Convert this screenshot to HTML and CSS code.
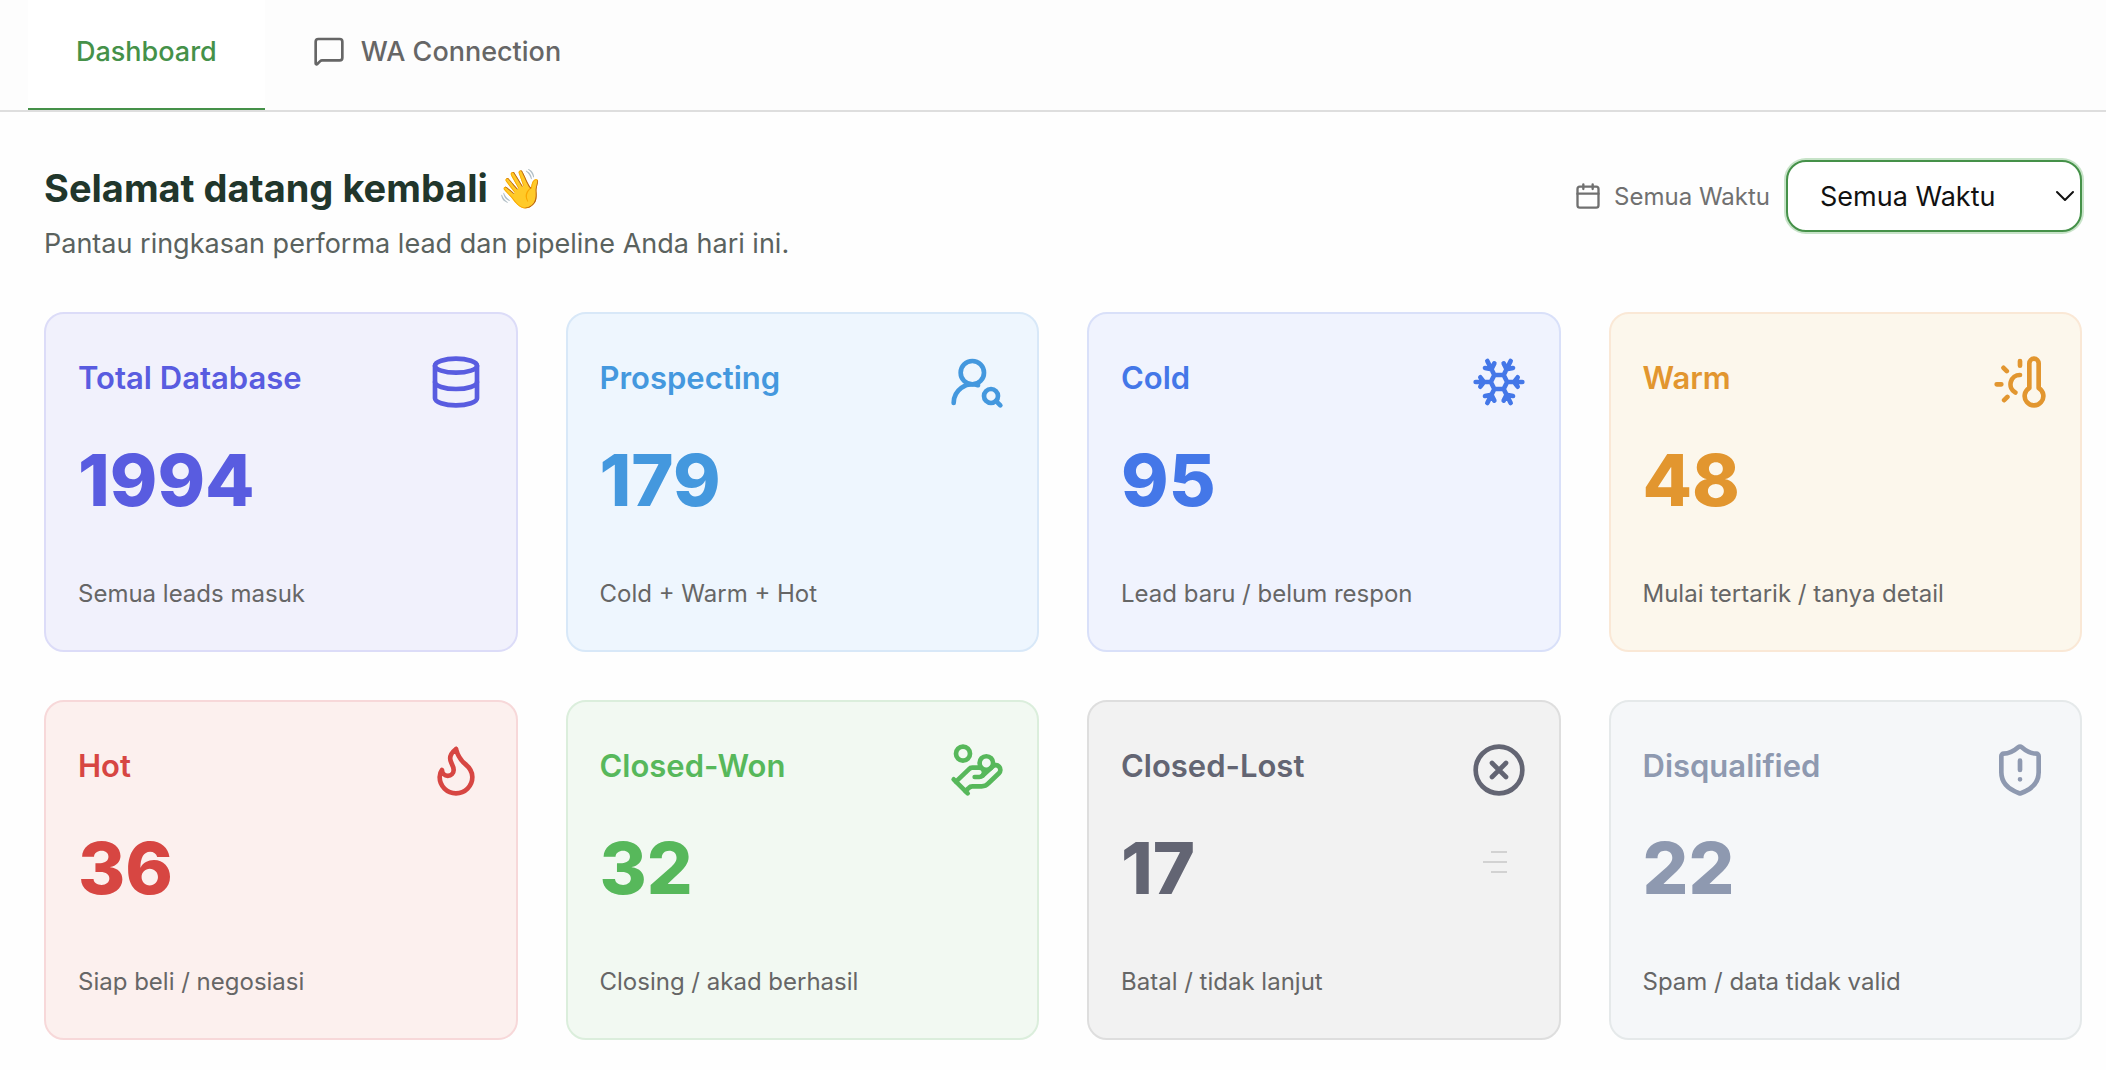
FILE: index.html
```html
<!DOCTYPE html>
<html lang="id">
<head>
<meta charset="utf-8">
<meta name="viewport" content="width=device-width, initial-scale=1">
<title>Dashboard</title>
<link rel="stylesheet" href="styles.css">
</head>
<body>
<nav class="tabs">
  <a class="tab tab-active" href="#dashboard" aria-current="page">Dashboard</a>
  <a class="tab" href="#wa">
    <svg class="icon tab-icon" viewBox="0 0 24 24" aria-hidden="true"><path d="M22 17a2 2 0 0 1-2 2H6.828a2 2 0 0 0-1.414.586l-2.202 2.202A.71.71 0 0 1 2 21.286V5a2 2 0 0 1 2-2h16a2 2 0 0 1 2 2z"/></svg>
    WA Connection
  </a>
</nav>
<main class="page">
  <header class="intro">
    <div>
      <h1 class="greeting">Selamat datang kembali 👋</h1>
      <p class="subtitle">Pantau ringkasan performa lead dan pipeline Anda hari ini.</p>
    </div>
    <div class="filter">
      <label class="filter-label" for="period">
        <svg class="icon filter-icon" viewBox="0 0 24 24" aria-hidden="true"><path d="M8 2v4M16 2v4M3 10h18"/><rect x="3" y="4" width="18" height="18" rx="2"/></svg>
        Semua Waktu
      </label>
      <div class="select-wrap">
        <select class="select" id="period"><option>Semua Waktu</option></select>
        <svg class="icon chevron" viewBox="0 0 20 12" aria-hidden="true"><path d="M2 2l8 8 8-8"/></svg>
      </div>
    </div>
  </header>
  <section class="grid">
    <article class="card indigo">
      <div class="card-head"><h2 class="title">Total Database</h2>
        <svg class="icon card-icon" viewBox="0 0 24 24" aria-hidden="true"><ellipse cx="12" cy="5" rx="9" ry="3"/><path d="M3 5V19A9 3 0 0 0 21 19V5"/><path d="M3 12A9 3 0 0 0 21 12"/></svg></div>
      <p class="value">1994</p>
      <p class="note">Semua leads masuk</p>
    </article>
    <article class="card sky">
      <div class="card-head"><h2 class="title">Prospecting</h2>
        <svg class="icon card-icon" viewBox="0 0 24 24" aria-hidden="true"><circle cx="10" cy="8" r="5"/><path d="M2 21a8 8 0 0 1 10.434-7.62"/><circle cx="18" cy="18" r="3"/><path d="m22 22-1.9-1.9"/></svg></div>
      <p class="value">179</p>
      <p class="note">Cold + Warm + Hot</p>
    </article>
    <article class="card blue">
      <div class="card-head"><h2 class="title">Cold</h2>
        <svg class="icon card-icon" viewBox="0 0 24 24" aria-hidden="true"><path d="m10 20-1.25-2.5L6 18M10 4 8.75 6.5 6 6M14 20l1.25-2.5L18 18M14 4l1.25 2.5L18 6M17 21l-3-6h-4M17 3l-3 6 1.5 3M2 12h6.5L10 9M20 10l-1.5 2 1.5 2M22 12h-6.5L14 15M4 10l1.5 2L4 14M7 21l3-6-1.5-3M7 3l3 6h4"/></svg></div>
      <p class="value">95</p>
      <p class="note">Lead baru / belum respon</p>
    </article>
    <article class="card amber">
      <div class="card-head"><h2 class="title">Warm</h2>
        <svg class="icon card-icon" viewBox="0 0 24 24" aria-hidden="true"><path d="M12 9a4 4 0 0 0-2 7.5M12 3v2M6.6 18.4l-1.4 1.4M20 4v10.54a4 4 0 1 1-4 0V4a2 2 0 0 1 4 0ZM4 13H2M6.34 7.34 4.93 5.93"/></svg></div>
      <p class="value">48</p>
      <p class="note">Mulai tertarik / tanya detail</p>
    </article>
    <article class="card red">
      <div class="card-head"><h2 class="title">Hot</h2>
        <svg class="icon card-icon" viewBox="0 0 24 24" aria-hidden="true"><path d="M12 3q1 4 4 6.5t3 5.5a1 1 0 0 1-14 0 5 5 0 0 1 1-3 1 1 0 0 0 5 0c0-2-1.5-3-1.5-5q0-2 2.5-4"/></svg></div>
      <p class="value">36</p>
      <p class="note">Siap beli / negosiasi</p>
    </article>
    <article class="card green">
      <div class="card-head"><h2 class="title">Closed-Won</h2>
        <svg class="icon card-icon" viewBox="0 0 24 24" aria-hidden="true"><path d="M11 15h2a2 2 0 1 0 0-4h-3c-.6 0-1.1.2-1.4.6L3 17"/><path d="m7 21 1.6-1.4c.3-.4.8-.6 1.4-.6h4c1.1 0 2.1-.4 2.8-1.2l4.6-4.4a2 2 0 0 0-2.75-2.91l-4.2 3.9"/><path d="m2 16 6 6"/><circle cx="16" cy="9" r="2.9"/><circle cx="6" cy="5" r="3"/></svg></div>
      <p class="value">32</p>
      <p class="note">Closing / akad berhasil</p>
    </article>
    <article class="card gray">
      <div class="card-head"><h2 class="title">Closed-Lost</h2>
        <svg class="icon card-icon" viewBox="0 0 24 24" aria-hidden="true"><circle cx="12" cy="12" r="10"/><path d="m15 9-6 6M9 9l6 6"/></svg></div>
      <p class="value">17</p>
      <p class="note">Batal / tidak lanjut</p>
      <svg class="lines" viewBox="0 0 24 24" aria-hidden="true"><path d="M8 2h16M0 12h24M8 22h16"/></svg>
    </article>
    <article class="card slate">
      <div class="card-head"><h2 class="title">Disqualified</h2>
        <svg class="icon card-icon" viewBox="0 0 24 24" aria-hidden="true"><path d="M20 13c0 5-3.5 7.5-7.66 8.95a1 1 0 0 1-.67-.01C7.5 20.5 4 18 4 13V6a1 1 0 0 1 1-1c2 0 4.5-1.2 6.24-2.72a1.17 1.17 0 0 1 1.52 0C14.51 3.81 17 5 19 5a1 1 0 0 1 1 1zM12 8v4M12 16h.01"/></svg></div>
      <p class="value">22</p>
      <p class="note">Spam / data tidak valid</p>
    </article>
  </section>
</main>
</body>
</html>
```
FILE: styles.css
```css
* { box-sizing: border-box; margin: 0; }
body { background: #fefefe; font-family: Inter, "Liberation Sans", sans-serif; color: #666; }
.icon { fill: none; stroke: currentColor; stroke-width: 2; stroke-linecap: round; stroke-linejoin: round; flex: none; }

.tabs { display: flex; height: 112px; padding-left: 28px; background: #fdfdfd; border-bottom: 2px solid #dedede; }
.tab { display: flex; align-items: center; gap: 16px; padding: 0 48px 6px; border-bottom: 2px solid transparent; color: #666; font-size: 27px; font-weight: 500; text-decoration: none; white-space: nowrap; }
.tab-active { background: #fff; border-color: #459149; color: #459149; }
.tab-icon { width: 32px; height: 32px; }

.page { padding: 48px 24px 30px 44px; }
.intro { display: flex; justify-content: space-between; align-items: flex-start; margin-bottom: 48px; }
.greeting { color: #21362b; font-size: 38px; line-height: 56px; font-weight: 700; }
.subtitle { margin-top: 8px; color: #5a625e; font-size: 27px; line-height: 40px; }
.filter { display: flex; align-items: center; gap: 16px; }
.filter-label { display: flex; align-items: center; gap: 12px; color: #707070; font-size: 24px; }
.filter-icon { width: 28px; height: 28px; }
.select-wrap { position: relative; width: 296px; }
.select { appearance: none; width: 100%; height: 72px; padding: 0 32px; border: 2px solid #459149; border-radius: 20px; background: #fff; box-shadow: 0 0 0 2px #c7e3c8; color: #111; font: 27px Inter, "Liberation Sans", sans-serif; }
.chevron { position: absolute; right: 7px; top: 30px; width: 20px; height: 12px; color: #111; pointer-events: none; }

.grid { display: grid; grid-template-columns: repeat(4, 1fr); gap: 48px; }
.card { position: relative; min-height: 340px; padding: 40px 32px; display: flex; flex-direction: column; border: 2px solid; border-radius: 20px; }
.card-head { display: flex; justify-content: space-between; height: 56px; }
.title { font-size: 31px; line-height: 48px; font-weight: 600; }
.card-icon { width: 56px; height: 56px; }
.value { margin-top: 30px; font-size: 72px; line-height: 80px; font-weight: 800; }
.note { margin-top: auto; color: #666; font-size: 24px; line-height: 32px; }
.lines { position: absolute; right: 52px; top: 148px; width: 24px; height: 24px; fill: none; stroke: #d2d2d2; stroke-width: 2; }

.indigo { color: #595ce0; background: #f1f1fc; border-color: #dcdcf8; }
.sky { color: #4498de; background: #eef6fe; border-color: #d8e8f8; }
.blue { color: #4477e8; background: #f0f3fe; border-color: #d9e0f9; }
.amber { color: #e2962f; background: #fcf7ec; border-color: #fae8d6; }
.red { color: #d74642; background: #fcf0ee; border-color: #f7d8d9; }
.green { color: #57b85b; background: #f2f9f2; border-color: #dbeedc; }
.gray { color: #636573; background: #f2f2f2; border-color: #dedede; }
.slate { color: #8e99b0; background: #f5f7f9; border-color: #e5e9ea; }
```
